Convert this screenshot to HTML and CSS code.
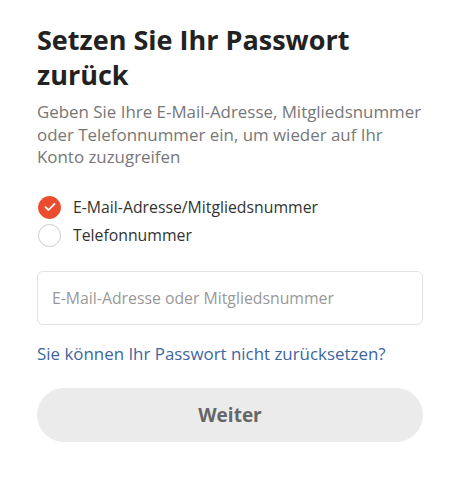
FILE: index.html
```html
<!DOCTYPE html>
<html lang="de">
<head>
<meta charset="utf-8">
<link rel="stylesheet" href="styles.css">
</head>
<body>
<main class="card">
  <h1 class="title">Setzen Sie Ihr Passwort zurück</h1>
  <p class="subtitle">Geben Sie Ihre E-Mail-Adresse, Mitgliedsnummer oder Telefonnummer ein, um wieder auf Ihr Konto zuzugreifen</p>
  <div class="options">
    <label class="option">
      <span class="radio checked">
        <svg width="12" height="10" viewBox="0 0 12 10"><path d="M1.5 5.2 L4.6 8 L10.5 1.8" fill="none" stroke="#fff" stroke-width="1.8" stroke-linecap="round" stroke-linejoin="round"/></svg>
      </span>
      <span class="option-text">E-Mail-Adresse/Mitgliedsnummer</span>
    </label>
    <label class="option">
      <span class="radio"></span>
      <span class="option-text">Telefonnummer</span>
    </label>
  </div>
  <div class="field">
    <input class="input" type="text" placeholder="E-Mail-Adresse oder Mitgliedsnummer">
  </div>
  <a class="link" href="#">Sie können Ihr Passwort nicht zurücksetzen?</a>
  <button class="btn" type="button">Weiter</button>
</main>
</body>
</html>
```

FILE: styles.css
```css
* { box-sizing: border-box; }
html, body { margin: 0; background: #fff; }
body { font-family: "Open Sans", "Noto Sans", sans-serif; }
.card { padding: 22px 51px 0 37px; display: flex; flex-direction: column; }
.title { margin: 0; font-size: 27px; line-height: 35px; font-weight: 700; color: #222; }
.subtitle { margin: 9px 0 0; font-size: 16.9px; line-height: 22.5px; color: #777; }
.options { margin-top: 27px; display: flex; flex-direction: column; gap: 5px; }
.option { display: flex; align-items: center; gap: 12px; }
.radio { width: 23px; height: 23px; border-radius: 50%; border: 1px solid #ccc; display: flex; align-items: center; justify-content: center; flex: none; margin-left: 1px; }
.radio.checked { background: #ea4c2e; border-color: #ea4c2e; }
.option-text { font-size: 15.8px; line-height: 22px; color: #333; }
.field { margin-top: 24px; }
.input { width: 100%; height: 54px; border: 1px solid #e3e3e3; border-radius: 6px; padding: 0 14px; font-family: inherit; font-size: 15.8px; color: #333; outline: none; }
.input::placeholder { color: #999; }
.link { margin-top: 18px; font-size: 16.9px; line-height: 22px; color: #3e66a0; text-decoration: none; }
.btn { margin-top: 23px; height: 54px; width: 100%; border: none; border-radius: 27px; background: #ebebeb; color: #666; font-family: inherit; font-size: 19px; font-weight: 700; }
```
